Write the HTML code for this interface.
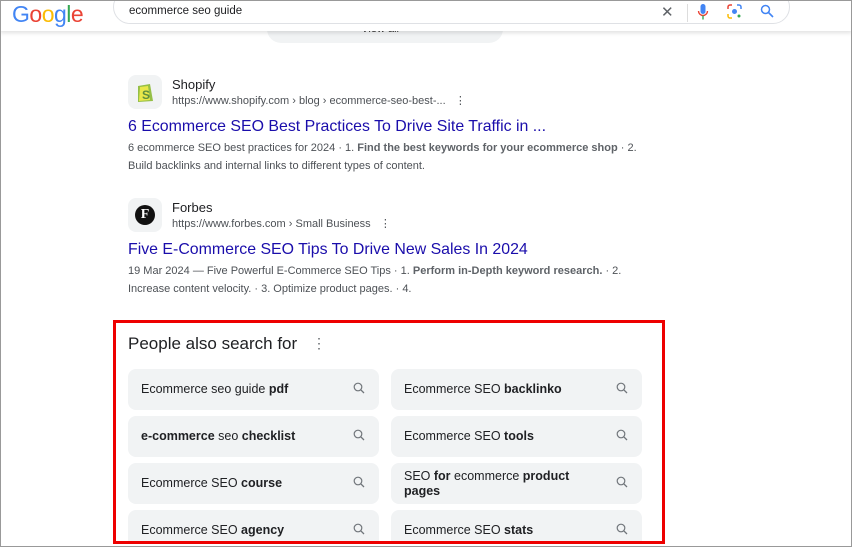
<!DOCTYPE html>
<html><head><style>
*{margin:0;padding:0;box-sizing:border-box}
body{width:852px;height:547px;overflow:hidden;background:#fff;font-family:"Liberation Sans",Arial,sans-serif;position:relative}
.frame{position:absolute;left:0;top:0;width:852px;height:547px;border:1px solid #999;z-index:5;pointer-events:none}
.abs{position:absolute}
.hdr{left:0;top:0;width:852px;height:31px;background:#fff;box-shadow:0 2px 4px rgba(0,0,0,.12);z-index:2}
.sb{left:113px;top:-10px;width:677px;height:34px;border:1px solid #dfe1e5;border-radius:17px;background:#fff}
.va{left:267px;top:14px;width:236px;height:29px;background:#f1f3f4;border-radius:0 0 14px 14px;font-size:11px;color:#333;text-align:center;padding-top:9px}
.fav{width:34px;height:34px;border-radius:8px;background:#f1f3f4}
.site{font-size:13px;color:#202124}
.url{font-size:11px;color:#4d5156}
.ttl{font-size:15.9px;color:#1a0dab}
.snip{font-size:11px;color:#4d5156;line-height:18px}
.snip b{color:#5f6368}
.red{left:113px;top:320px;width:552px;height:224px;border:3px solid #e00;overflow:hidden}
.chip{position:absolute;width:251px;height:41px;background:#f1f3f4;border-radius:8px;font-size:12.5px;color:#202124;padding-left:13px;display:flex;align-items:center;line-height:15px}
.chip svg{position:absolute;right:14px;top:13px}
</style></head><body>
<div class="frame"></div>
<div class="abs hdr">
<div class="abs sb"></div>
<div class="abs" style="left:12px;top:1px;font-size:23px;letter-spacing:-0.5px"><span style="color:#4285f4">G</span><span style="color:#ea4335">o</span><span style="color:#fbbc05">o</span><span style="color:#4285f4">g</span><span style="color:#34a853">l</span><span style="color:#ea4335">e</span></div>
<div class="abs" style="left:129px;top:5px;font-size:11.5px;color:#202124">ecommerce seo guide</div>
<div class="abs" style="left:661px;top:3px;font-size:15px;color:#5f6368">✕</div>
<div class="abs" style="left:687px;top:4px;width:1px;height:18px;background:#ddd"></div>
<svg class="abs" style="left:697px;top:4px" width="12" height="17" viewBox="0 0 12 17"><rect x="3.5" y="0" width="5" height="10" rx="2.5" fill="#4285f4"/><path d="M1.5 7a4.5 4.5 0 0 0 9 0" stroke="#ea4335" stroke-width="1.4" fill="none"/><path d="M6 11.5v4" stroke="#34a853" stroke-width="1.4"/></svg>
<svg class="abs" style="left:727px;top:4px" width="15" height="15" viewBox="0 0 15 15"><path d="M1 5V3a2 2 0 0 1 2-2h2" stroke="#ea4335" stroke-width="1.5" fill="none"/><path d="M10 1h2a2 2 0 0 1 2 2v2" stroke="#4285f4" stroke-width="1.5" fill="none"/><path d="M1 10v2a2 2 0 0 0 2 2h2" stroke="#fbbc05" stroke-width="1.5" fill="none"/><circle cx="7.5" cy="7.5" r="2.5" fill="#4285f4"/><circle cx="12" cy="12" r="1.5" fill="#34a853"/></svg>
<svg class="abs" style="left:760px;top:4px" width="14" height="14" viewBox="0 0 14 14"><circle cx="5.5" cy="5.5" r="4" stroke="#4285f4" stroke-width="1.5" fill="none"/><path d="M8.5 8.5L13 13" stroke="#4285f4" stroke-width="1.6"/></svg>
</div>
<div class="abs va">View all &nbsp;›</div>

<div class="abs fav" style="left:128px;top:75px"><svg width="34" height="34" viewBox="0 0 34 34"><path d="M10 11l12-2 3 17-15 1z" fill="#95bf47"/><path d="M12 12l8-1 2 14-11 1z" fill="#e8e84a"/><text x="14" y="24" font-size="12" font-weight="bold" fill="#5e8e3e" font-family="Liberation Sans">S</text></svg></div>
<div class="abs site" style="left:172px;top:77px">Shopify</div>
<div class="abs url" style="left:172px;top:94px">https://www.shopify.com › blog › ecommerce-seo-best-... &nbsp;&nbsp;⋮</div>
<div class="abs ttl" style="left:128px;top:118px">6 Ecommerce SEO Best Practices To Drive Site Traffic in ...</div>
<div class="abs snip" style="left:128px;top:139px">6 ecommerce SEO best practices for 2024 · 1. <b>Find the best keywords for your ecommerce shop</b> · 2.<br>Build backlinks and internal links to different types of content.</div>

<div class="abs fav" style="left:128px;top:198px"><div style="position:absolute;left:7px;top:7px;width:20px;height:20px;border-radius:50%;background:#111;color:#fff;font-family:'Liberation Serif',serif;font-weight:bold;font-size:14px;text-align:center;line-height:20px">F</div></div>
<div class="abs site" style="left:172px;top:200px">Forbes</div>
<div class="abs url" style="left:172px;top:217px">https://www.forbes.com › Small Business &nbsp;&nbsp;⋮</div>
<div class="abs ttl" style="left:128px;top:241px">Five E-Commerce SEO Tips To Drive New Sales In 2024</div>
<div class="abs snip" style="left:128px;top:262px">19 Mar 2024 — Five Powerful E-Commerce SEO Tips · 1. <b>Perform in-Depth keyword research.</b> · 2.<br>Increase content velocity. · 3. Optimize product pages. · 4.</div>

<div class="abs red">
<div class="abs" style="left:12px;top:11px;font-size:17px;color:#202124">People also search for</div>
<div class="abs" style="left:196px;top:12px;font-size:14px;color:#5f6368">⋮</div>
<div class="chip" style="left:12px;top:46px">Ecommerce seo guide&nbsp;<b>pdf</b><svg width="12" height="12" viewBox="0 0 12 12"><circle cx="5" cy="5" r="3.8" stroke="#70757a" stroke-width="1.2" fill="none"/><path d="M7.8 7.8L11 11" stroke="#70757a" stroke-width="1.3"/></svg></div>
<div class="chip" style="left:275px;top:46px">Ecommerce SEO&nbsp;<b>backlinko</b><svg width="12" height="12" viewBox="0 0 12 12"><circle cx="5" cy="5" r="3.8" stroke="#70757a" stroke-width="1.2" fill="none"/><path d="M7.8 7.8L11 11" stroke="#70757a" stroke-width="1.3"/></svg></div>
<div class="chip" style="left:12px;top:93px"><b>e-commerce</b>&nbsp;seo&nbsp;<b>checklist</b><svg width="12" height="12" viewBox="0 0 12 12"><circle cx="5" cy="5" r="3.8" stroke="#70757a" stroke-width="1.2" fill="none"/><path d="M7.8 7.8L11 11" stroke="#70757a" stroke-width="1.3"/></svg></div>
<div class="chip" style="left:275px;top:93px">Ecommerce SEO&nbsp;<b>tools</b><svg width="12" height="12" viewBox="0 0 12 12"><circle cx="5" cy="5" r="3.8" stroke="#70757a" stroke-width="1.2" fill="none"/><path d="M7.8 7.8L11 11" stroke="#70757a" stroke-width="1.3"/></svg></div>
<div class="chip" style="left:12px;top:140px">Ecommerce SEO&nbsp;<b>course</b><svg width="12" height="12" viewBox="0 0 12 12"><circle cx="5" cy="5" r="3.8" stroke="#70757a" stroke-width="1.2" fill="none"/><path d="M7.8 7.8L11 11" stroke="#70757a" stroke-width="1.3"/></svg></div>
<div class="chip" style="left:275px;top:140px"><span>SEO <b>for</b> ecommerce <b>product<br>pages</b></span><svg width="12" height="12" viewBox="0 0 12 12"><circle cx="5" cy="5" r="3.8" stroke="#70757a" stroke-width="1.2" fill="none"/><path d="M7.8 7.8L11 11" stroke="#70757a" stroke-width="1.3"/></svg></div>
<div class="chip" style="left:12px;top:187px">Ecommerce SEO&nbsp;<b>agency</b><svg width="12" height="12" viewBox="0 0 12 12"><circle cx="5" cy="5" r="3.8" stroke="#70757a" stroke-width="1.2" fill="none"/><path d="M7.8 7.8L11 11" stroke="#70757a" stroke-width="1.3"/></svg></div>
<div class="chip" style="left:275px;top:187px">Ecommerce SEO&nbsp;<b>stats</b><svg width="12" height="12" viewBox="0 0 12 12"><circle cx="5" cy="5" r="3.8" stroke="#70757a" stroke-width="1.2" fill="none"/><path d="M7.8 7.8L11 11" stroke="#70757a" stroke-width="1.3"/></svg></div>
</div>
</body></html>
